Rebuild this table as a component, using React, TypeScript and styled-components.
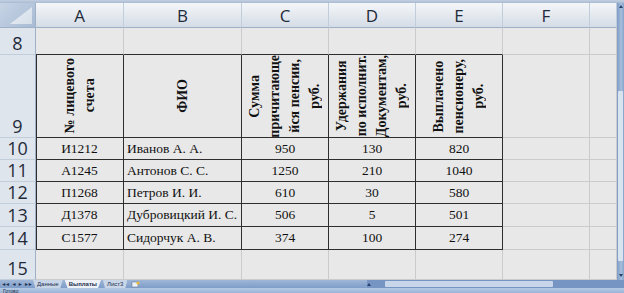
import { FC, Fragment } from "react";
import styled, { createGlobalStyle, css } from "styled-components";

type Line = "dark" | "grid";

const GlobalStyle = createGlobalStyle`
  html, body {
    margin: 0;
    padding: 0;
    background: #e7e7e7;
    overflow: hidden;
  }
`;

const Window = styled.div`
  width: 624px;
  height: 293px;
  display: flex;
  flex-direction: column;
  overflow: hidden;
`;

const TopBand = styled.div`
  height: 3px;
  background: linear-gradient(#c3d0e0, #a9bbd3);
`;

const Main = styled.div`
  display: flex;
  height: 277px;
`;

const Sheet = styled.div`
  display: grid;
  grid-template-columns: 36px 88px 118px 87px 87px 87px 87px 27px;
  grid-template-rows: 25px 27px 83px 22px 22px 22px 23px 23px 30px;
  width: 617px;
  background: #e8e8e8;
`;

const Corner = styled.div`
  position: relative;
  background: linear-gradient(135deg, #c7d4e5, #a8bbd4);
  border-right: 1px solid #9fb1c7;
  border-bottom: 1px solid #9fb1c7;
  box-sizing: border-box;

  &::after {
    content: "";
    position: absolute;
    right: 3px;
    bottom: 3px;
    width: 22px;
    height: 17px;
    background: linear-gradient(135deg, #e9eef5, #d5dee9);
    clip-path: polygon(100% 0, 100% 100%, 0 100%);
  }
`;

const ColHead = styled.div`
  display: flex;
  align-items: center;
  justify-content: center;
  box-sizing: border-box;
  background: linear-gradient(#f4f6f9, #e3e8ee 55%, #d4dce6);
  border-right: 1px solid #c2cddb;
  border-bottom: 1px solid #9eb0c6;
  font-family: "Open Sans", "DejaVu Sans", sans-serif;
  font-size: 17px;
  color: #1f2b3a;
  padding-top: 1px;
`;

const RowHead = styled.div`
  display: flex;
  align-items: flex-end;
  justify-content: center;
  box-sizing: border-box;
  background: #dfe5ed;
  border-right: 1px solid #9eb0c6;
  border-bottom: 1px solid #c2cddb;
  font-family: "Open Sans", "DejaVu Sans", sans-serif;
  font-size: 18px;
  line-height: 17px;
  color: #1f2b3a;
  padding-bottom: 2px;
`;

const lineColor = (l: Line) => (l === "dark" ? "#2e2e2e" : "#cbcbcb");

const Cell = styled.div<{
  $r?: Line;
  $b?: Line;
  $edge?: boolean;
  $align?: "left" | "center";
}>`
  display: flex;
  align-items: center;
  justify-content: ${({ $align }) => ($align === "left" ? "flex-start" : "center")};
  padding: 0 3px;
  box-sizing: border-box;
  overflow: hidden;
  white-space: nowrap;
  border-right: 1px solid ${({ $r = "grid" }) => lineColor($r)};
  border-bottom: 1px solid ${({ $b = "grid" }) => lineColor($b)};
  font-family: "Liberation Serif", "Times New Roman", serif;
  font-size: 13.5px;
  color: #111;

  ${({ $edge }) =>
    $edge &&
    css`
      box-shadow: inset 1px 0 #2e2e2e;
    `}
`;

const Rotated = styled.div`
  writing-mode: vertical-rl;
  text-orientation: sideways;
  transform: rotate(180deg);
  text-align: center;
  font-family: "Liberation Serif", "Times New Roman", serif;
  font-weight: bold;
  font-size: 14px;
  line-height: 20px;
  white-space: nowrap;
  color: #111;
`;

const VScroll = styled.div`
  width: 7px;
  background: linear-gradient(90deg, #7d9bc6, #a7bedc 60%, #86a3cb);
  display: flex;
  flex-direction: column;
  justify-content: space-between;
  align-items: center;
  padding: 2px 0 3px;
  box-sizing: border-box;
`;

const ScrollArrow = styled.div<{ $down?: boolean }>`
  width: 0;
  height: 0;
  border-left: 2px solid transparent;
  border-right: 2px solid transparent;
  ${({ $down }) =>
    $down
      ? css`
          border-top: 3px solid #27406a;
        `
      : css`
          border-bottom: 3px solid #27406a;
        `}
`;

const VThumb = styled.div`
  width: 5px;
  height: 170px;
  margin-top: 70px;
  background: #d8e3f0;
  border-radius: 1px;
  flex: none;
`;

const TabBar = styled.div`
  height: 8px;
  display: flex;
  align-items: stretch;
  background: linear-gradient(#9fb6d6, #7e9dc9);
  font-family: "Liberation Sans", Arial, sans-serif;
  font-size: 6px;
  line-height: 8px;
  color: #1d2f4d;
`;

const Nav = styled.div`
  width: 33px;
  display: flex;
  justify-content: space-around;
  align-items: center;
  font-size: 5px;
  letter-spacing: -1px;
`;

const Tab = styled.div<{ $active?: boolean }>`
  padding: 0 4px;
  margin-right: 2px;
  background: ${({ $active }) => ($active ? "#eef2f7" : "#c9d6e7")};
  font-weight: ${({ $active }) => ($active ? "bold" : "normal")};
  clip-path: polygon(0 0, 100% 0, 92% 100%, 8% 100%);
`;

const NewTab = styled.div`
  width: 12px;
  display: flex;
  align-items: center;
  justify-content: center;
`;

const HScroll = styled.div`
  margin-left: auto;
  width: 249px;
  display: flex;
  align-items: center;
  gap: 2px;
  padding-right: 8px;
  background: #7795c3;
`;

const HThumb = styled.div`
  margin-left: 12px;
  width: 168px;
  height: 6px;
  background: #c8d6e9;
  border-radius: 1px;
`;

const StatusBar = styled.div`
  height: 5px;
  background: linear-gradient(#b5c9e3, #9bb4d6);
  font-family: "Liberation Sans", Arial, sans-serif;
  font-size: 5px;
  line-height: 6px;
  color: #1d2f4d;
  padding-left: 3px;
  overflow: hidden;
`;

type Row = {
  acc: string;
  name: string;
  sum: string;
  held: string;
  paid: string;
};

const rows: Row[] = [
  { acc: "И1212", name: "Иванов А. А.", sum: "950", held: "130", paid: "820" },
  { acc: "А1245", name: "Антонов С. С.", sum: "1250", held: "210", paid: "1040" },
  { acc: "П1268", name: "Петров И. И.", sum: "610", held: "30", paid: "580" },
  { acc: "Д1378", name: "Дубровицкий И. С.", sum: "506", held: "5", paid: "501" },
  { acc: "С1577", name: "Сидорчук А. В.", sum: "374", held: "100", paid: "274" },
];

const heads: string[][] = [
  ["№ лицевого", "счета"],
  ["ФИО"],
  ["Сумма", "причитающе", "йся пенсии,", "руб."],
  ["Удержания", "по исполнит.", "Документам,", "руб."],
  ["Выплачено", "пенсионеру,", "руб."],
];

const letters = ["A", "B", "C", "D", "E", "F", ""];

const Lines: FC<{ lines: string[] }> = ({ lines }) => (
  <Rotated>
    {lines.map((l, i) => (
      <span key={i}>
        {l}
        {i < lines.length - 1 && <br />}
      </span>
    ))}
  </Rotated>
);

function App() {
  return (
    <Window>
      <GlobalStyle />
      <TopBand />
      <Main>
        <Sheet>
          <Corner />
          {letters.map((l, i) => (
            <ColHead key={i}>{l}</ColHead>
          ))}

          <RowHead>8</RowHead>
          {letters.map((_, i) => (
            <Cell key={i} $b={i < 5 ? "dark" : "grid"} />
          ))}

          <RowHead>9</RowHead>
          {heads.map((h, i) => (
            <Cell key={i} $r="dark" $b="dark" $edge={i === 0}>
              <Lines lines={h} />
            </Cell>
          ))}
          <Cell />
          <Cell />

          {rows.map((r, i) => (
            <Fragment key={i}>
              <RowHead>{10 + i}</RowHead>
              <Cell $r="dark" $b="dark" $edge>
                {r.acc}
              </Cell>
              <Cell $r="dark" $b="dark" $align="left">
                {r.name}
              </Cell>
              <Cell $r="dark" $b="dark">
                {r.sum}
              </Cell>
              <Cell $r="dark" $b="dark">
                {r.held}
              </Cell>
              <Cell $r="dark" $b="dark">
                {r.paid}
              </Cell>
              <Cell />
              <Cell />
            </Fragment>
          ))}

          <RowHead>15</RowHead>
          {letters.map((_, i) => (
            <Cell key={i} />
          ))}
        </Sheet>
        <VScroll>
          <ScrollArrow />
          <VThumb />
          <ScrollArrow $down />
        </VScroll>
      </Main>
      <TabBar>
        <Nav>
          <span>◄◄</span>
          <span>◄</span>
          <span>►</span>
          <span>►►</span>
        </Nav>
        <Tab>Данные</Tab>
        <Tab $active>Выплаты</Tab>
        <Tab>Лист3</Tab>
        <NewTab>
          <svg width="9" height="7" viewBox="0 0 9 7">
            <rect x="1" y="1" width="6" height="5" fill="#eef2f7" stroke="#6b7f9c" strokeWidth="0.6" />
            <circle cx="7" cy="2" r="1.6" fill="#e8b83a" />
          </svg>
        </NewTab>
        <HScroll>
          <ScrollArrow />
          <HThumb />
        </HScroll>
      </TabBar>
      <StatusBar>Готово</StatusBar>
    </Window>
  );
}

export default App;
